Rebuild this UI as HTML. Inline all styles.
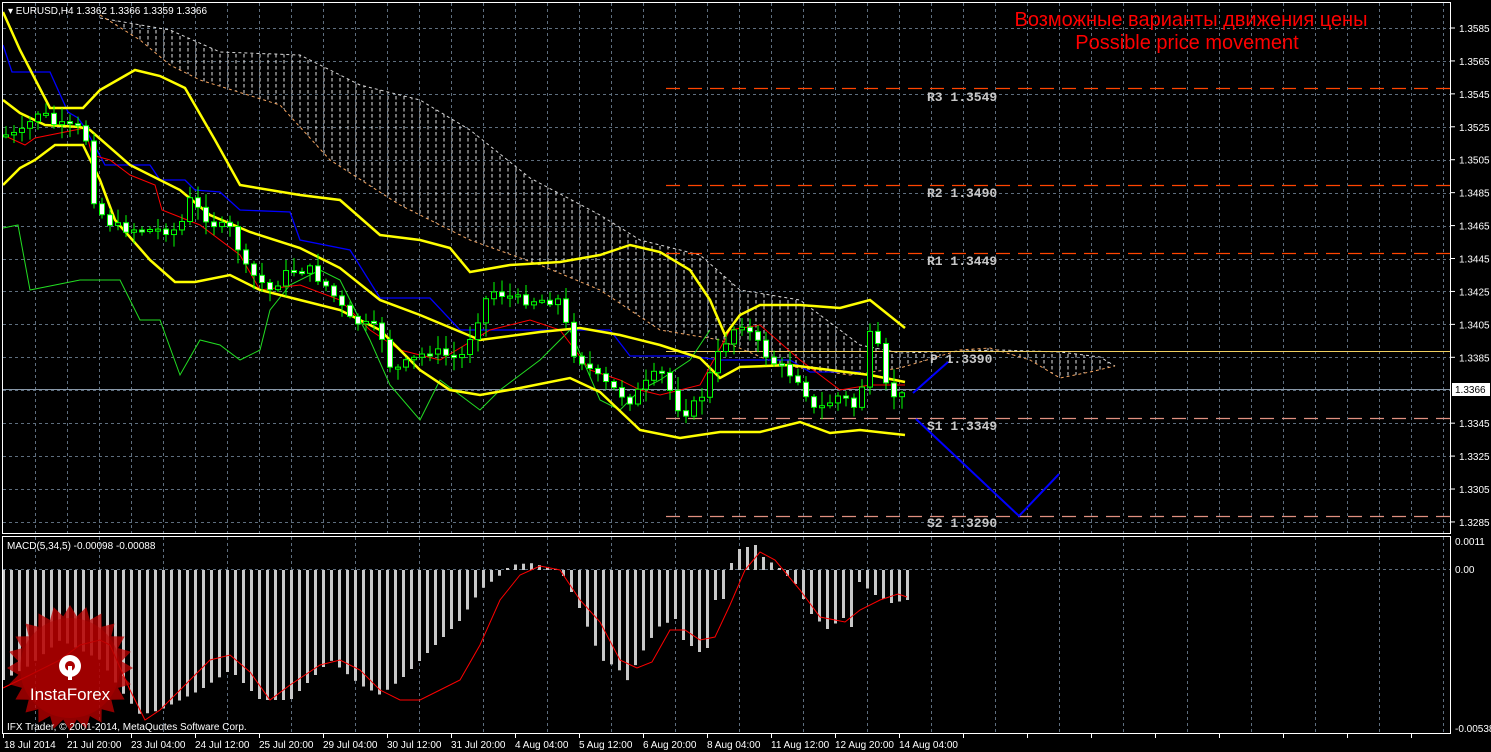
<!DOCTYPE html>
<html><head><meta charset="utf-8">
<style>
html,body{margin:0;padding:0;background:#000;width:1491px;height:752px;overflow:hidden}
svg{display:block}
.ax{font-family:"Liberation Sans","DejaVu Sans",sans-serif;font-size:10px;fill:#fff}
.pv{font-family:"Liberation Mono","DejaVu Sans Mono",monospace;font-size:13px;fill:#c8c8c8;font-weight:bold}
</style></head>
<body>
<svg id="s" width="1491" height="752" viewBox="0 0 1491 752" xmlns="http://www.w3.org/2000/svg">
<defs>
<pattern id="cl" width="8" height="6" patternUnits="userSpaceOnUse">
<line x1="4" y1="0" x2="4" y2="3.5" stroke="#f0f0f0" stroke-width="1"/>
</pattern>
</defs>
<rect width="1491" height="752" fill="#000"/>
<g id="grid"></g>
<path id="cloud" fill="url(#cl)" opacity="0.95"/>
<polyline id="cTop" fill="none" stroke="#d8d8d8" stroke-width="1" stroke-dasharray="3,3"/>
<polyline id="cBot" fill="none" stroke="#f4a460" stroke-width="1" stroke-dasharray="3,3"/>
<line x1="666" y1="88.5" x2="1451" y2="88.5" stroke="#ff4500" stroke-width="1.3" stroke-dasharray="14,8"/>
<line x1="666" y1="185.5" x2="1451" y2="185.5" stroke="#ff4500" stroke-width="1.3" stroke-dasharray="14,8"/>
<line x1="666" y1="253.5" x2="1451" y2="253.5" stroke="#ff4500" stroke-width="1.3" stroke-dasharray="14,8"/>
<line x1="666" y1="351.5" x2="1451" y2="351.5" stroke="#f0d060" stroke-width="1"/>
<line x1="666" y1="418.5" x2="1451" y2="418.5" stroke="#e09080" stroke-width="1.3" stroke-dasharray="14,8"/>
<line x1="666" y1="516.5" x2="1451" y2="516.5" stroke="#e09080" stroke-width="1.3" stroke-dasharray="14,8"/>
<line x1="2" y1="389.5" x2="1451" y2="389.5" stroke="#8898a8" stroke-width="1"/>
<text class="pv" x="927" y="101">R3 1.3549</text>
<text class="pv" x="927" y="197">R2 1.3490</text>
<text class="pv" x="927" y="265">R1 1.3449</text>
<text class="pv" x="930" y="363">P 1.3390</text>
<text class="pv" x="927" y="430">S1 1.3349</text>
<text class="pv" x="927" y="527">S2 1.3290</text>
<g id="lines"></g>
<g id="candles"></g>
<polyline points="913,393 948,362" fill="none" stroke="#0000ff" stroke-width="2"/>
<polyline points="916,419 1019,516 1059,474" fill="none" stroke="#0000ff" stroke-width="2"/>
<text x="1191" y="26" text-anchor="middle" font-family="Liberation Sans,sans-serif" font-size="20" fill="#ff0000">Возможные варианты движения цены</text>
<text x="1187" y="49" text-anchor="middle" font-family="Liberation Sans,sans-serif" font-size="20" fill="#ff0000">Possible price movement</text>
<g id="macd"></g>
<g transform="translate(70,668)">
<polygon id="star" fill="#c00000" opacity="0.75"/>
<circle r="50" fill="#b00000" opacity="0.45"/>
<g fill="#fff">
<circle cx="0" cy="-2" r="11"/>
<circle cx="0" cy="-2" r="5" fill="#a00"/>
<rect x="-2" y="-2" width="4" height="14" fill="#fff"/>
</g>
<text x="0" y="32" text-anchor="middle" font-family="Liberation Sans,sans-serif" font-size="17" fill="#fff">InstaForex</text>
</g>
<rect x="2.5" y="2.5" width="1448" height="531" fill="none" stroke="#fff" stroke-width="1"/>
<rect x="2.5" y="536.5" width="1448" height="197" fill="none" stroke="#fff" stroke-width="1"/>
<g id="axis"></g>
<text class="ax" x="8" y="14" font-size="10">▾ EURUSD,H4  1.3362 1.3366 1.3359 1.3366</text>
<text class="ax" x="7" y="549" font-size="10">MACD(5,34,5) -0.00098 -0.00088</text>
<text class="ax" x="7" y="730" font-size="10">IFX Trader, © 2001-2014, MetaQuotes Software Corp.</text>
</svg>
<script>
(function(){
var NS="http://www.w3.org/2000/svg";
function el(p,t,a){var e=document.createElementNS(NS,t);for(var k in a)e.setAttribute(k,a[k]);p.appendChild(e);return e;}
function interp(pts,x){if(x<=pts[0][0])return pts[0][1];for(var i=1;i<pts.length;i++){if(x<=pts[i][0]){var a=pts[i-1],b=pts[i];return a[1]+(b[1]-a[1])*(x-a[0])/(b[0]-a[0]);}}return pts[pts.length-1][1];}
function pl(pts){return pts.map(function(p){return p[0]+","+p[1]}).join(" ");}
var g=document.getElementById("grid");
var GC="#5e6e7e";
for(var x=35;x<1451;x+=32) el(g,"line",{x1:x+.5,y1:3,x2:x+.5,y2:533,stroke:GC,"stroke-dasharray":"3,3"});
for(var y=28;y<533;y+=32.93) el(g,"line",{x1:3,y1:Math.round(y)+.5,x2:1450,y2:Math.round(y)+.5,stroke:GC,"stroke-dasharray":"3,3"});
for(var x=35;x<1451;x+=64) el(g,"line",{x1:x+.5,y1:537,x2:x+.5,y2:733,stroke:GC,"stroke-dasharray":"3,3"});
el(g,"line",{x1:3,y1:569.5,x2:1450,y2:569.5,stroke:GC,"stroke-dasharray":"3,3"});
var ctop=[[100,18],[170,30],[220,52],[300,55],[360,85],[420,100],[470,130],[530,178],[600,215],[640,240],[700,255],[740,290],[800,300],[860,345],[900,353],[1000,350],[1060,352],[1100,357],[1115,366]];
var cbot=[[100,15],[140,40],[170,65],[200,80],[280,105],[330,160],[400,205],[470,240],[540,265],[600,290],[660,330],[720,340],[780,365],[850,375],[900,368],[960,350],[990,348],[1030,360],[1060,378],[1090,372],[1115,366]];
document.getElementById("cTop").setAttribute("points",pl(ctop));
document.getElementById("cBot").setAttribute("points",pl(cbot));
document.getElementById("cloud").setAttribute("d","M"+pl(ctop)+" L"+pl(cbot.slice().reverse())+"Z");
var L=document.getElementById("lines");
var Y="#ffff00";
var up=[[3,12],[20,50],[50,108],[83,108],[100,90],[135,70],[160,76],[185,88],[215,140],[240,185],[300,195],[340,200],[380,235],[420,240],[450,248],[470,272],[510,265],[560,262],[600,255],[630,245],[660,252],[690,270],[710,300],[725,335],[740,315],[760,305],[800,305],[840,308],[870,300],[905,328]];
var mid=[[3,100],[20,113],[45,125],[80,127],[90,130],[130,165],[180,190],[210,215],[250,232],[300,248],[340,268],[380,300],[420,315],[480,340],[540,332],[580,328],[620,335],[660,345],[700,358],[720,378],[740,367],[790,365],[830,370],[870,375],[905,382]];
var low=[[3,185],[20,168],[35,160],[55,145],[83,145],[100,180],[115,220],[150,260],[175,282],[195,282],[230,275],[260,290],[300,300],[340,310],[380,330],[420,370],[450,390],[480,395],[520,388],[570,378],[600,392],[640,430],[680,438],[720,432],[760,432],[800,422],[830,433],[860,430],[905,435]];
var blue=[[3,45],[12,72],[50,72],[68,112],[78,118],[85,128],[105,165],[150,165],[160,180],[185,180],[195,190],[220,192],[240,210],[290,212],[300,240],[350,250],[380,298],[430,298],[460,330],[530,330],[610,330],[630,356],[690,356],[720,360],[790,360],[810,372],[860,372]];
var red=[[3,135],[25,145],[35,138],[85,128],[92,155],[110,160],[130,175],[155,185],[162,210],[200,225],[240,255],[260,290],[300,285],[340,300],[370,330],[400,350],[440,360],[490,330],[530,320],[560,330],[590,370],[620,380],[640,390],[660,395],[700,385],[730,330],[760,325],[800,360],[840,390],[870,385],[905,385]];
var grn=[[3,228],[18,225],[30,290],[80,280],[120,280],[140,320],[160,320],[180,375],[200,340],[220,345],[240,360],[260,350],[270,310],[290,285],[320,270],[340,280],[370,340],[390,385],[420,420],[440,380],[480,410],[500,390],[520,375],[540,360],[560,340],[570,330],[600,400],[620,410],[640,390],[660,380],[690,360],[710,330]];
el(L,"polyline",{points:pl(grn),fill:"none",stroke:"#22dd22","stroke-width":1});
el(L,"polyline",{points:pl(blue),fill:"none",stroke:"#0000ff","stroke-width":1.3});
el(L,"polyline",{points:pl(red),fill:"none",stroke:"#ff0000","stroke-width":1});
[up,mid,low].forEach(function(p){el(L,"polyline",{points:pl(p),fill:"none",stroke:Y,"stroke-width":2.5});});
var cl=[[3,135],[20,135],[40,110],[55,125],[85,130],[92,195],[105,220],[120,228],[150,230],[180,230],[188,198],[200,212],[215,225],[232,230],[245,268],[270,290],[290,270],[310,270],[330,290],[350,320],[380,330],[392,372],[430,350],[460,360],[490,290],[520,300],[560,300],[572,350],[600,380],[630,400],[660,370],[682,415],[700,400],[720,350],[740,320],[770,360],[800,380],[815,412],[840,395],[858,410],[873,318],[884,385],[897,398],[905,395]];
var C=document.getElementById("candles");
var seed=7;function rnd(){seed=(seed*9301+49297)%233280;return seed/233280;}
var prev=interp(cl,3);
for(var x=6;x<=906;x+=8){
 var c=interp(cl,x)+(rnd()-.5)*10;var o=prev;
 var hi=Math.min(o,c)-2-rnd()*12, lo=Math.max(o,c)+2+rnd()*12;
 el(C,"line",{x1:x,y1:hi,x2:x,y2:lo,stroke:"#00ff00","stroke-width":1});
 var t=Math.min(o,c),h=Math.max(Math.abs(c-o),2);
 el(C,"rect",{x:x-2.5,y:t,width:5,height:h,fill:(c>o?"#fff":"#000"),stroke:"#00ff00","stroke-width":1});
 prev=c;
}
var M=document.getElementById("macd");
var hb=[[3,680],[30,665],[60,640],[80,650],[100,660],[120,690],[140,715],[160,710],[180,700],[200,690],[230,670],[260,700],[290,700],[310,680],[330,660],[360,685],[380,695],[400,680],[430,650],[460,620],[480,590],[500,575],[510,565],[530,563],[560,570],[580,610],[601,660],[617,667],[626,682],[642,652],[658,627],[675,619],[683,640],[699,652],[707,648],[715,600],[723,599],[731,563],[739,549],[755,545],[763,557],[779,568],[795,584],[811,614],[827,629],[843,618],[851,627],[859,582],[875,595],[891,603],[907,600]];
for(var x=3;x<=907;x+=8){var v=interp(hb,x);var t=Math.min(v,570),h=Math.abs(v-570);if(h<1)h=1;
 el(M,"rect",{x:x-1,y:t,width:3,height:h,fill:"#c8c8c8"});}
var sg=[[3,688],[30,675],[60,660],[80,645],[100,640],[110,645],[130,690],[145,720],[160,710],[180,690],[210,660],[230,655],[250,672],[270,700],[290,685],[320,665],[340,660],[360,670],[380,690],[400,700],[420,700],[440,690],[460,680],[480,645],[500,600],[520,575],[540,566],[560,570],[580,600],[600,622],[620,660],[637,668],[652,662],[670,630],[685,630],[700,640],[715,637],[730,605],[745,570],[760,552],[775,560],[800,590],[820,617],[845,622],[860,610],[880,600],[898,594],[907,597]];
el(M,"polyline",{points:pl(sg),fill:"none",stroke:"#ff0000","stroke-width":1});
var pts=[];for(var i=0;i<48;i++){var r=i%2?52:63;var a=i*Math.PI/24;pts.push([(r*Math.cos(a)).toFixed(1),(r*Math.sin(a)).toFixed(1)]);}
document.getElementById("star").setAttribute("points",pl(pts));
var A=document.getElementById("axis");
var prices=["1.3585","1.3565","1.3545","1.3525","1.3505","1.3485","1.3465","1.3445","1.3425","1.3405","1.3385","1.3365","1.3345","1.3325","1.3305","1.3285"];
prices.forEach(function(p,i){var y=28+i*32.93;if(p=="1.3365")return;el(A,"line",{x1:1451,y1:y,x2:1455,y2:y,stroke:"#fff"});var t=el(A,"text",{x:1459,y:y+4,"class":"ax"});t.textContent=p;});
el(A,"rect",{x:1452,y:383,width:38,height:13,fill:"#fff"});
var tt=el(A,"text",{x:1455,y:393,"class":"ax",style:"fill:#000"});tt.textContent="1.3366";
[["0.0011",545],["0.00",573],["-0.00538",732]].forEach(function(a){var t=el(A,"text",{x:1455,y:a[1],"class":"ax"});t.textContent=a[0];});
var dates=["18 Jul 2014","21 Jul 20:00","23 Jul 04:00","24 Jul 12:00","25 Jul 20:00","29 Jul 04:00","30 Jul 12:00","31 Jul 20:00","4 Aug 04:00","5 Aug 12:00","6 Aug 20:00","8 Aug 04:00","11 Aug 12:00","12 Aug 20:00","14 Aug 04:00"];
for(var k=0;k<23;k++){var x=3+64*k;el(A,"line",{x1:x+.5,y1:734,x2:x+.5,y2:738,stroke:"#fff"});}
dates.forEach(function(d,i){var t=el(A,"text",{x:(i==0?4:3+64*i),y:748,"class":"ax"});t.textContent=d;});
})();
</script>
</body></html>
